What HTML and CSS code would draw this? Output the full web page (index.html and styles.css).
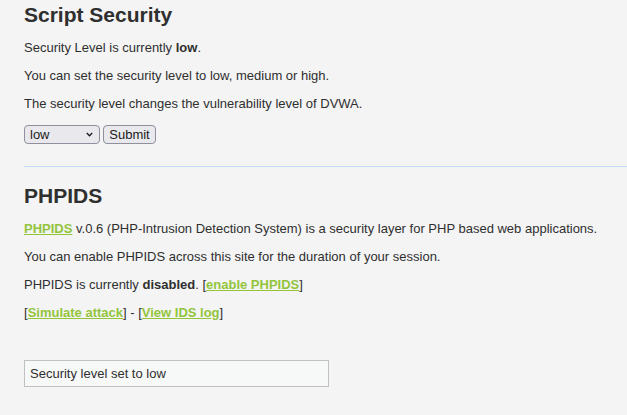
FILE: index.html
```html
<!DOCTYPE html>
<html>
<head>
<meta charset="utf-8">
<title>DVWA Security</title>
<link rel="stylesheet" href="styles.css">
</head>
<body>
<div class="body_padded">
  <h1>Script Security</h1>
  <p>Security Level is currently <strong>low</strong>.</p>
  <p>You can set the security level to low, medium or high.</p>
  <p>The security level changes the vulnerability level of DVWA.</p>
  <form class="level-form">
    <span class="select-wrap">
      <select name="security" class="level-select">
        <option value="low" selected>low</option>
        <option value="medium">medium</option>
        <option value="high">high</option>
      </select>
      <svg class="chevron" width="7" height="5" viewBox="0 0 7 5" aria-hidden="true">
        <path d="M0.8 1 L3.5 3.8 L6.2 1" fill="none" stroke="#1a1a1a" stroke-width="1.3"/>
      </svg>
    </span>
    <input type="submit" value="Submit" name="seclev_submit" class="submit-btn">
  </form>

  <hr class="divider">

  <h2 class="section-title">PHPIDS</h2>
  <p><a href="#" class="link">PHPIDS</a> v.0.6 (PHP-Intrusion Detection System) is a security layer for PHP based web applications.</p>
  <p>You can enable PHPIDS across this site for the duration of your session.</p>
  <p>PHPIDS is currently <strong>disabled</strong>. [<a href="#" class="link">enable PHPIDS</a>]</p>
  <p>[<a href="#" class="link">Simulate attack</a>] - [<a href="#" class="link">View IDS log</a>]</p>

  <div class="message">Security level set to low</div>
</div>
</body>
</html>
```

FILE: styles.css
```css
html, body {
  margin: 0;
  padding: 0;
  background: #f4f4f4;
}

body {
  font-family: "Liberation Sans", Arial, sans-serif;
  font-size: 13px;
  line-height: 15px;
  color: #2f2f2f;
}

.body_padded {
  padding: 0 0 0 24px;
}

h1, .section-title {
  font-size: 21px;
  line-height: 24px;
  font-weight: bold;
  margin: 0;
  color: #2f2f2f;
}

h1 {
  margin-top: 3px;
}

p {
  margin: 13px 0 0 0;
}

strong {
  font-weight: bold;
}

.level-form {
  margin: 14px 0 0 0;
  display: flex;
  align-items: center;
  gap: 3px;
  height: 19px;
}

.select-wrap {
  position: relative;
  display: block;
  width: 76px;
  height: 19px;
}

.level-select {
  -webkit-appearance: none;
  appearance: none;
  box-sizing: border-box;
  font-family: "Liberation Sans", Arial, sans-serif;
  font-size: 13px;
  line-height: 15px;
  width: 76px;
  height: 19px;
  margin: 0;
  padding: 0 0 0 5px;
  color: #1a1a1a;
  background: #e9e9ed;
  border: 1px solid #8f8f9d;
  border-radius: 4px;
}

.chevron {
  position: absolute;
  left: 62px;
  top: 7px;
  pointer-events: none;
}

.submit-btn {
  -webkit-appearance: none;
  appearance: none;
  box-sizing: border-box;
  font-family: "Liberation Sans", Arial, sans-serif;
  font-size: 13px;
  line-height: 15px;
  height: 19px;
  width: 53px;
  margin: 0;
  padding: 0;
  color: #1a1a1a;
  background: #e9e9ed;
  border: 1px solid #8f8f9d;
  border-radius: 4px;
}

.divider {
  border: 0;
  border-top: 1px solid #c6d8f7;
  height: 0;
  margin: 22px 0 0 0;
}

.section-title {
  margin-top: 17px;
}

.link {
  color: #93c53c;
  font-weight: bold;
  text-decoration: underline;
}

.message {
  margin-top: 40px;
  width: 293px;
  padding: 5px;
  border: 1px solid #c0c0c0;
  background: #f7f8f8;
  color: #2f2f2f;
}
```
